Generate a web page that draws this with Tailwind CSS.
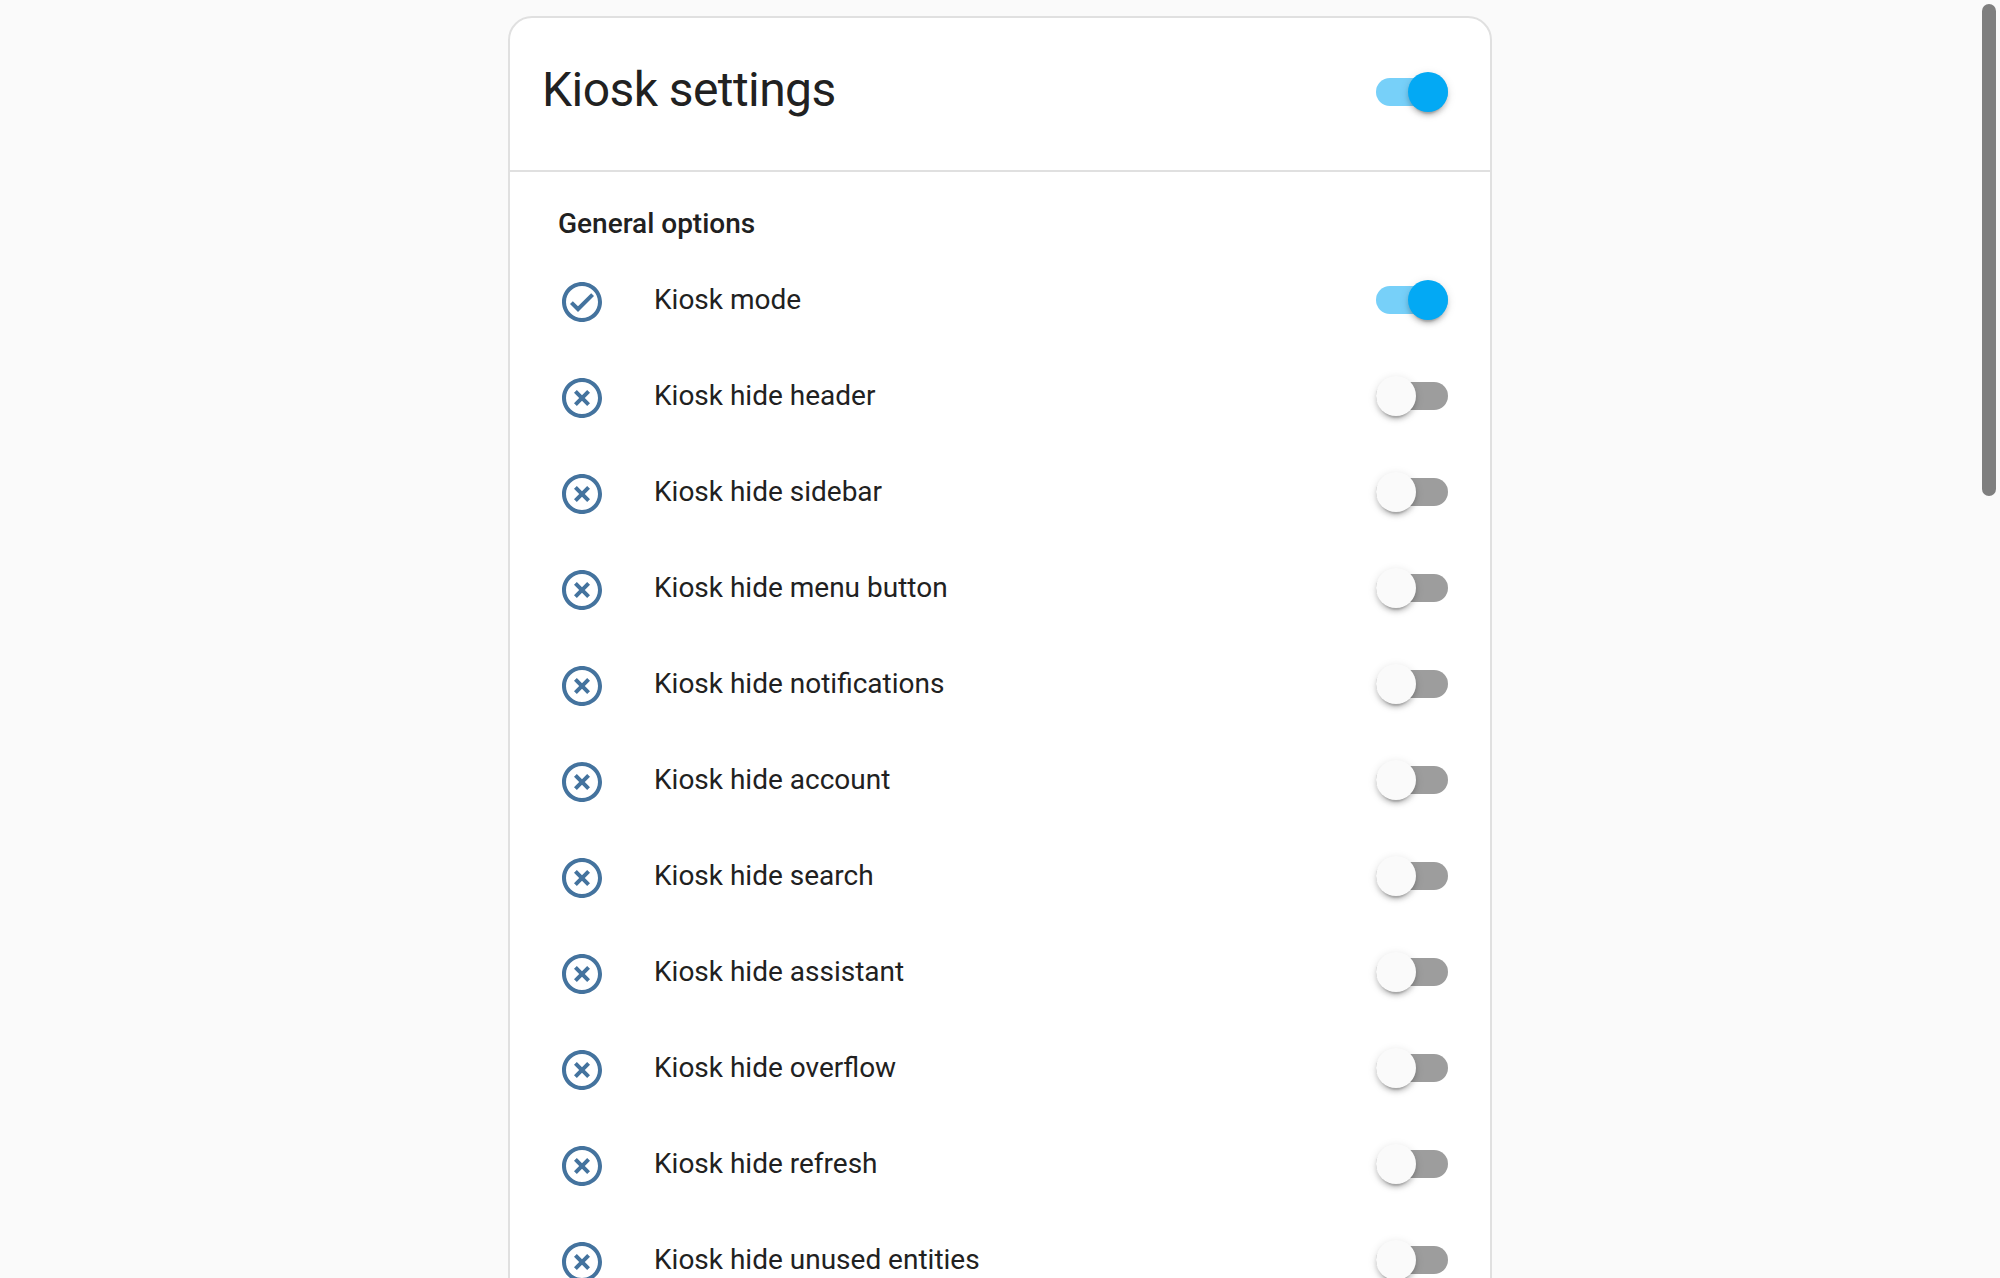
<!DOCTYPE html>
<html lang="en">
<head>
<meta charset="utf-8">
<title>Kiosk settings</title>
<script src="https://cdn.jsdelivr.net/npm/@tailwindcss/browser@4"></script>
</head>
<body class="relative h-screen overflow-hidden bg-[#fafafa] font-[Roboto,sans-serif] text-[#212121]">
  <main class="mx-auto mt-4 h-[1600px] w-[984px] rounded-t-[24px] border-2 border-[#e0e0e0] bg-white">
    <header class="flex h-[154px] items-start justify-between border-b-2 border-[#e0e0e0] pr-[42px] pl-8 pt-[54px]">
      <h1 class="-mt-[14px] text-[48px] leading-[64px] tracking-[-0.012em]">Kiosk settings</h1>
      <span data-switch="on"></span>
    </header>
    <section class="pt-8 pr-[42px] pl-12">
      <h2 class="h-[48px] text-[28px] leading-[40px] font-medium">General options</h2>
      <ul id="rows"></ul>
    </section>
  </main>
  <div class="absolute top-1 right-1 h-[492px] w-[14px] rounded-full bg-[#7f7f7f]"></div>

  <script>
    const shadow = 'shadow-[0_6px_2px_-4px_rgba(0,0,0,0.2),0_4px_4px_0_rgba(0,0,0,0.14),0_2px_10px_0_rgba(0,0,0,0.12)]';
    const toggle = on => `
      <span class="flex h-10 w-[72px] items-center">
        <span class="flex h-7 w-[72px] items-center rounded-full ${on ? 'justify-end bg-[#03a9f4]/54' : 'bg-[#9d9d9d]'}">
          <span class="size-10 rounded-full shadow-[0_6px_2px_-4px_rgba(0,0,0,0.2),0_4px_4px_0_rgba(0,0,0,0.14),0_2px_10px_0_rgba(0,0,0,0.12)] ${on ? 'bg-[#03a9f4]' : 'bg-[#fafafa]'}"></span>
        </span>
      </span>`;
    const ring = 'M12 2C6.48 2 2 6.48 2 12S6.48 22 12 22 22 17.52 22 12 17.52 2 12 2M12 20C7.59 20 4 16.41 4 12S7.59 4 12 4 20 7.59 20 12 16.41 20 12 20';
    const check = 'M16.59 7.58L10 14.17L7.41 11.59L6 13L10 17L18 9L16.59 7.58Z';
    const cross = 'M14.59 8L12 10.59L9.41 8L8 9.41L10.59 12L8 14.59L9.41 16L12 13.41L14.59 16L16 14.59L13.41 12L16 9.41L14.59 8Z';
    const rows = [
      ['Kiosk mode', true],
      ['Kiosk hide header', false],
      ['Kiosk hide sidebar', false],
      ['Kiosk hide menu button', false],
      ['Kiosk hide notifications', false],
      ['Kiosk hide account', false],
      ['Kiosk hide search', false],
      ['Kiosk hide assistant', false],
      ['Kiosk hide overflow', false],
      ['Kiosk hide refresh', false],
      ['Kiosk hide unused entities', false],
    ];
    document.getElementById('rows').innerHTML = rows.map(([label, on]) => `
      <li class="flex h-24 items-center">
        <svg class="mt-1 size-12 shrink-0 fill-[#44739e]" viewBox="0 0 24 24"><path d="${ring}${on ? check : cross}"/></svg>
        <span class="ml-12 flex-1 text-[28px] leading-10">${label}</span>
        ${toggle(on)}
      </li>`).join('');
    document.querySelectorAll('[data-switch]').forEach(el => { el.innerHTML = toggle(el.dataset.switch === 'on'); });
  </script>
</body>
</html>
